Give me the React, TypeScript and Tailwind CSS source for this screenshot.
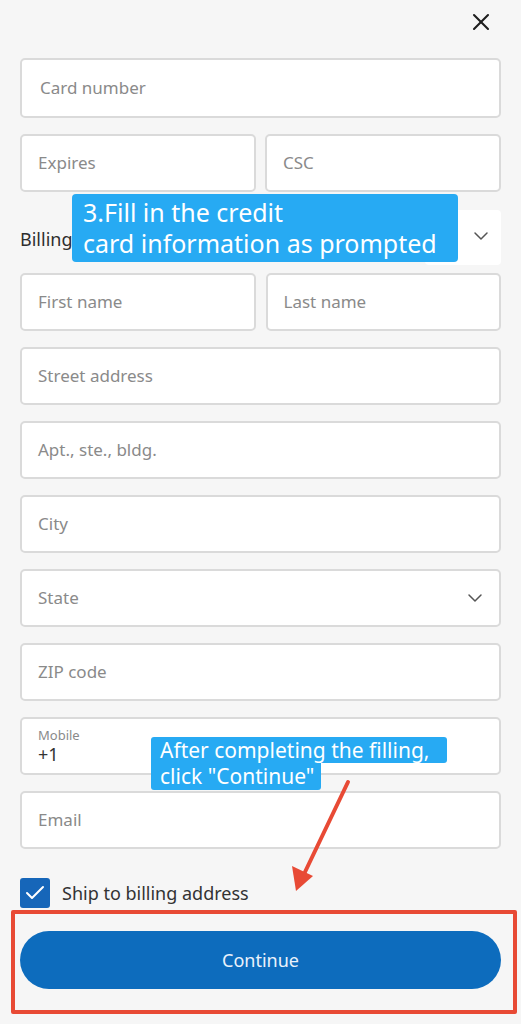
import { X, ChevronDown, Check } from 'lucide-react'

const FONT = { fontFamily: '"Noto Sans", Roboto, "Liberation Sans", sans-serif' }

function Field({ label, chevron }: { label: string; chevron?: boolean }) {
  return (
    <div className="flex h-[58px] items-center justify-between rounded-[5px] border-2 border-[#dadada] bg-white pl-4 pr-3">
      <span className="text-[17px] text-[#8a8a8a]">{label}</span>
      {chevron && <ChevronDown className="h-6 w-6 text-[#555]" strokeWidth={1.5} />}
    </div>
  )
}

export default function App() {
  return (
    <div className="relative h-[1024px] w-[521px] overflow-hidden bg-[#f6f6f6]" style={FONT}>
      <div className="px-5">
        {/* Header */}
        <div className="flex h-[58px] justify-end pr-[6px] pt-[8px]">
          <X className="h-[28px] w-[28px] text-[#1e1e1e]" strokeWidth={1.8} />
        </div>

        <div className="flex h-[60px] items-center rounded-[5px] border-2 border-[#dadada] bg-white pl-[18px]">
          <span className="text-[17px] text-[#8a8a8a]">Card number</span>
        </div>

        <div className="mt-4 grid grid-cols-2 gap-[9px]">
          <Field label="Expires" />
          <Field label="CSC" />
        </div>

        {/* Billing address */}
        <div className="mt-2 flex h-[65px] justify-between">
          <span className="self-center pt-[14px] text-[18px] text-[#2e2e2e]">Billing address</span>
          <div className="mt-[10px] flex h-[55px] w-[76px] items-center justify-end rounded-[4px] bg-white pr-2 pb-[4px]">
            <ChevronDown className="h-6 w-6 text-[#555]" strokeWidth={1.5} />
          </div>
        </div>

        <div className="mt-2 grid grid-cols-2 gap-[10px]">
          <Field label="First name" />
          <Field label="Last name" />
        </div>

        <div className="mt-4 flex flex-col gap-4">
          <Field label="Street address" />
          <Field label="Apt., ste., bldg." />
          <Field label="City" />
          <Field label="State" chevron />
          <Field label="ZIP code" />
          <div className="flex h-[58px] flex-col justify-center rounded-[5px] border-2 border-[#dadada] bg-white pl-4">
            <span className="text-[13px] leading-[16px] text-[#8a8a8a]">Mobile</span>
            <span className="text-[18px] leading-[22px] text-[#333]">+1</span>
          </div>
          <Field label="Email" />
        </div>

        {/* Checkbox */}
        <div className="mt-[29px] flex h-[30px] items-center gap-3">
          <div className="flex h-[30px] w-[30px] items-center justify-center rounded-[3px] bg-[#1666b9]">
            <Check className="h-6 w-6 text-white" strokeWidth={2} />
          </div>
          <span className="text-[18px] text-[#333]">Ship to billing address</span>
        </div>

        <button className="mt-[23px] flex h-[58px] w-full items-center justify-center rounded-full bg-[#0d6cbd] text-[18px] text-[#eaf2fb]">
          Continue
        </button>
      </div>

      {/* Annotation 1 */}
      <div className="absolute left-[72px] top-[194px] w-[386px] whitespace-nowrap rounded-[4px] bg-[#27aaf3] pl-[11px] pt-[3px] pb-[3px] text-[25px] leading-[31px] text-white">
        <div>3.Fill in the credit</div>
        <div>card information as prompted</div>
      </div>

      {/* Annotation 2 */}
      <div className="absolute left-[151px] top-[737px] whitespace-nowrap text-[21px] leading-[26px] text-white">
        <div className="w-[296px] rounded-t-[3px] rounded-br-[3px] bg-[#27aaf3] pl-[9px]">After completing the filling,</div>
        <div className="w-[170px] rounded-b-[3px] bg-[#27aaf3] pl-[9px] pb-[1px]">click "Continue"</div>
      </div>

      {/* Arrow */}
      <svg className="absolute left-0 top-0" width="521" height="1024" viewBox="0 0 521 1024">
        <line x1="348" y1="782" x2="305" y2="872" stroke="#e84a35" strokeWidth="4" strokeLinecap="round" />
        <polygon points="296,891 292,866 313,876" fill="#e84a35" />
      </svg>

      {/* Red highlight box */}
      <div className="absolute left-[11px] top-[910px] h-[104px] w-[506px] rounded-[2px] border-4 border-[#e84a35]" />
    </div>
  )
}
